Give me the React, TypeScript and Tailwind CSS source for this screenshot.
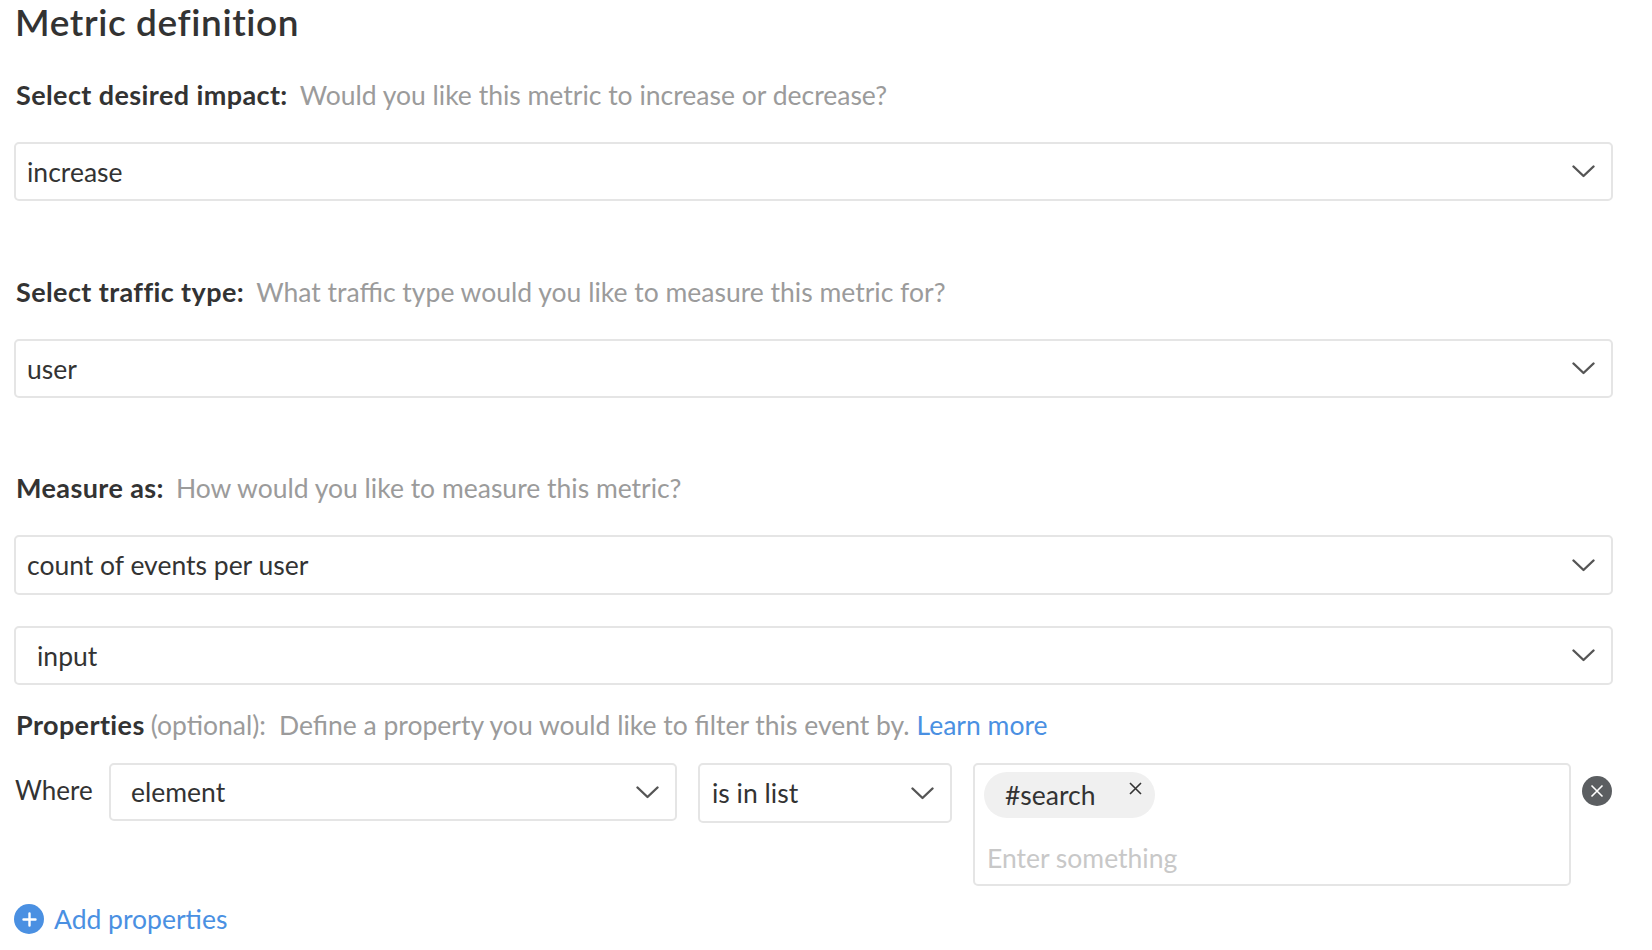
import React from 'react'

const FONT = { fontFamily: 'Lato, "Liberation Sans", sans-serif' }

function Chevron() {
  return (
    <svg width="23" height="13" viewBox="0 0 23 13" fill="none" className="shrink-0">
      <polyline points="1.5,1.5 11.5,11 21.5,1.5" stroke="#555" strokeWidth="2.4" strokeLinecap="round" strokeLinejoin="round" />
    </svg>
  )
}

function Select({ value, indent = false, className = '' }: { value: string; indent?: boolean; className?: string }) {
  return (
    <div className={`flex items-center justify-between border-2 border-[#e5e5e5] rounded-[5px] bg-white pr-[16px] ${indent ? 'pl-[21px]' : 'pl-[11px]'} ${className}`}>
      <span className="text-[26.5px] leading-[32px] text-[#333]">{value}</span>
      <Chevron />
    </div>
  )
}

function Label({ title, hint, className = '' }: { title: string; hint: string; className?: string }) {
  return (
    <div className={`leading-[32px] pl-[2px] ${className}`}>
      <span className="text-[27px] tracking-[0.4px] font-bold text-[#333]">{title}</span>
      <span className="ml-[12px] text-[26.5px] text-[#9b9b9b]">{hint}</span>
    </div>
  )
}

export default function App() {
  return (
    <div style={FONT} className="min-h-screen w-full bg-white px-[14px] pt-[2px]">
      <div className="w-[1599px] flex flex-col">
        <h1 className="text-[37px] leading-[40px] tracking-[0.6px] font-semibold text-[#333] pl-[1px]">Metric definition</h1>

        <Label className="mt-[37px]" title="Select desired impact:" hint="Would you like this metric to increase or decrease?" />
        <Select className="mt-[27px] h-[59px]" value="increase" />

        <Label className="mt-[75px]" title="Select traffic type:" hint="What traffic type would you like to measure this metric for?" />
        <Select className="mt-[27px] h-[59px]" value="user" />

        <Label className="mt-[74px]" title="Measure as:" hint="How would you like to measure this metric?" />
        <Select className="mt-[27px] h-[60px]" value="count of events per user" />
        <Select className="mt-[31px] h-[59px]" indent value="input" />

        <div className="mt-[24px] leading-[32px] pl-[2px]">
          <span className="text-[27px] tracking-[0.4px] font-bold text-[#333]">Properties</span>
          <span className="ml-[6px] text-[26.5px] text-[#9b9b9b]">(optional):</span>
          <span className="ml-[13px] text-[26.5px] text-[#9b9b9b]">Define a property you would like to filter this event by.</span>
          <a href="#" className="ml-[7px] text-[26.5px] text-[#4a90e2]">Learn more</a>
        </div>

        {/* where row */}
        <div className="mt-[18px] flex items-start">
          <div className="w-[95px] pt-[11px] pl-[1px] text-[26px] leading-[32px] text-[#333]">Where</div>
          <Select className="w-[568px] h-[58px] pl-[20px]" value="element" />
          <Select className="ml-[21px] w-[254px] h-[60px] pl-[12px]" value="is in list" />
          <div className="ml-[21px] w-[598px] h-[123px] border-2 border-[#e5e5e5] rounded-[5px] pl-[9px] pt-[7px]">
            <div className="inline-flex h-[46px] items-center rounded-full bg-[#f0f0f0] pl-[21px] pr-[13px]">
              <span className="text-[26.5px] leading-[32px] text-[#333]">#search</span>
              <svg width="13" height="13" viewBox="0 0 13 13" className="ml-[33px] -mt-[13px]">
                <path d="M1 1L12 12M12 1L1 12" stroke="#333" strokeWidth="1.6" />
              </svg>
            </div>
            <div className="mt-[24px] pl-[3px] text-[26.5px] leading-[32px] text-[#c8c8c8]">Enter something</div>
          </div>
          <button className="ml-[11px] mt-[13px] w-[30px] h-[30px] rounded-full bg-[#5b5e61] flex items-center justify-center">
            <svg width="14" height="14" viewBox="0 0 14 14">
              <path d="M1.5 1.5L12.5 12.5M12.5 1.5L1.5 12.5" stroke="#fff" strokeWidth="1.6" />
            </svg>
          </button>
        </div>

        <a href="#" className="mt-[17px] flex items-center text-[#4a90e2]">
          <span className="w-[30px] h-[30px] rounded-full bg-[#4a90e2] flex items-center justify-center">
            <svg width="15" height="15" viewBox="0 0 15 15">
              <path d="M7.5 1.5V13.5M1.5 7.5H13.5" stroke="#fff" strokeWidth="2.4" strokeLinecap="round" />
            </svg>
          </span>
          <span className="ml-[10px] text-[26.5px] leading-[32px]">Add properties</span>
        </a>
      </div>
    </div>
  )
}
